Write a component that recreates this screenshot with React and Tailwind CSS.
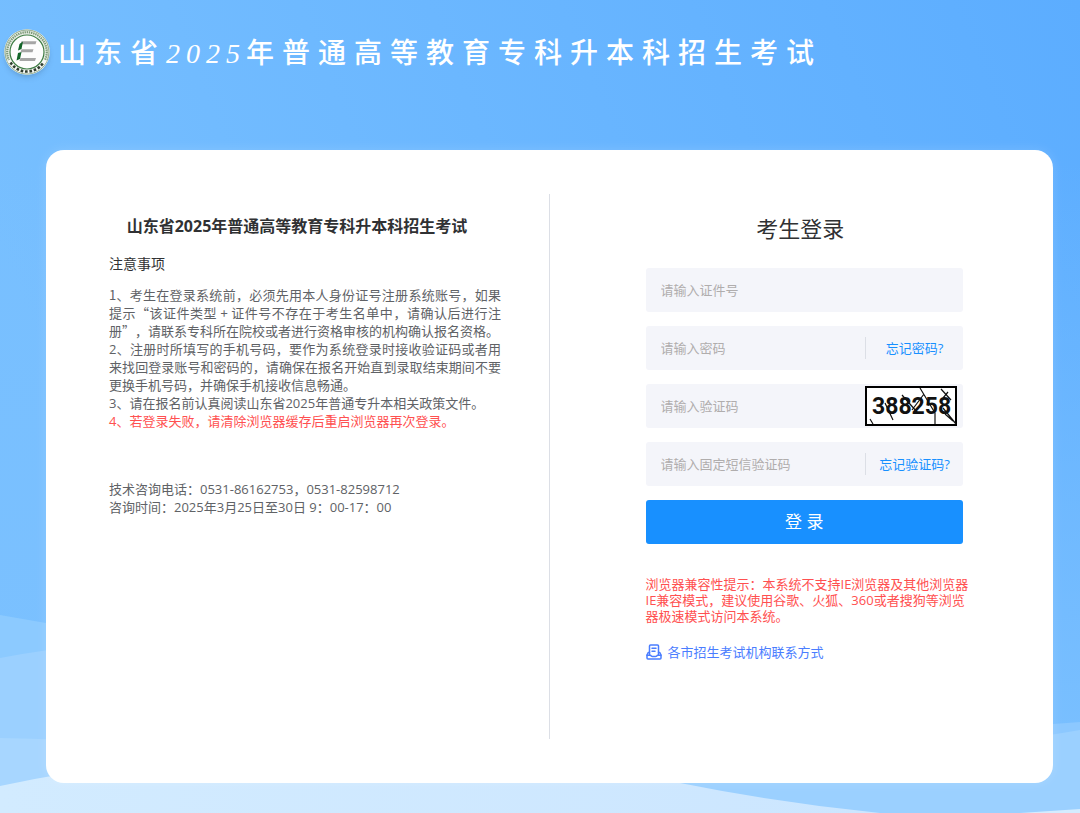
import { useState } from "react";

const Logo = () => (
    <svg viewBox="0 0 46 46" className="h-[46px] w-[46px] shrink-0 rounded-full shadow-md" aria-hidden="true">
        <circle cx="23" cy="23" r="23" fill="#e9eee6" />
        <circle cx="23" cy="23" r="22" fill="none" stroke="#8fa98b" strokeWidth="1" />
        <circle cx="23" cy="23" r="19.8" fill="none" stroke="#7d9b79" strokeWidth="2.2" strokeDasharray="1.4 0.8" />
        <path d="M5 31A20 20 0 0 0 41 31" fill="none" stroke="#f6f8f4" strokeWidth="4" />
        <path d="M6.5 33.5A19.6 19.6 0 0 0 39.5 33.5" fill="none" stroke="#2f3d2f" strokeWidth="2.6" strokeDasharray="2.6 1.8" />
        <circle cx="23" cy="23" r="17" fill="#fdfdfd" stroke="#3f7d45" strokeWidth="1.2" />
        <path d="M17.5 12.3H32.5L31.5 15.3H16.5ZM17.5 20.3H29.5L28.5 23.3H16.5ZM16.5 29H32L31 32H15.5Z" fill="#a6a6a6" />
        <path d="M15.5 15L19 12.5L17.5 20L14 21.5ZM14 24L17.5 23L16 30L12.5 31.5Z" fill="#14662a" />
    </svg>
);

const Background = () => (
    <svg
        viewBox="0 0 1080 813"
        preserveAspectRatio="none"
        className="absolute inset-0 -z-10 h-full w-full"
        aria-hidden="true"
    >
        <defs>
            <linearGradient id="sky" x1="0" y1="0.3" x2="1" y2="0">
                <stop offset="0" stopColor="#77bfff" />
                <stop offset="1" stopColor="#5cadff" />
            </linearGradient>
            <linearGradient id="skyBottom" x1="0" y1="0" x2="0" y2="1">
                <stop offset="0.2" stopColor="#7cc1ff" stopOpacity="0" />
                <stop offset="1" stopColor="#7cc1ff" />
            </linearGradient>
            <linearGradient id="front" x1="0" y1="0" x2="1" y2="0">
                <stop offset="0" stopColor="#d2ebff" />
                <stop offset="1" stopColor="#cce6ff" />
            </linearGradient>
        </defs>
        <rect width="1080" height="813" fill="url(#sky)" />
        <rect width="1080" height="813" fill="url(#skyBottom)" />
        <path d="M0 615Q300 665 600 760T1080 730V813H0Z" fill="#8ccaff" />
        <path d="M1080 722Q900 735 700 760V813H1080Z" fill="#8cc8ff" />
        <path d="M0 658Q250 610 560 690T1080 730V813H0Z" fill="#9bd0ff" />
        <path d="M0 738Q200 740 400 790V813H0Z" fill="#a7d6ff" />
        <path d="M0 786Q330 716 680 783Q780 803 880 813H0Z" fill="url(#front)" />
        <path d="M1020 813L1080 809V813Z" fill="#d4ecff" />
    </svg>
);

const Captcha = () => (
    <svg viewBox="0 0 92 40" className="h-10 w-[92px]" role="img" aria-label="验证码">
        <rect x="1" y="1" width="90" height="38" fill="#fff" stroke="#000" strokeWidth="2" />
        <text x="7" y="28" fontSize="23" fontWeight="700" fontFamily="Roboto, sans-serif" fill="#111">
            388258
        </text>
        <path
            d="M20 17L28 34M37 9L52 26M55 2L70 27M47 24L59 8M76 3L86 14M78 22L91 38M70 27V38M80 28L88 35M5 33L8 38M83 6L78 12"
            stroke="#111"
            strokeWidth="1.2"
            fill="none"
        />
    </svg>
);

const ContactIcon = () => (
    <svg
        viewBox="0 0 16 16"
        className="h-4 w-4 shrink-0"
        fill="none"
        stroke="currentColor"
        strokeWidth="1.5"
        strokeLinejoin="round"
        strokeLinecap="round"
        aria-hidden="true"
    >
        <path d="M3.5 10.5V2Q3.5 1 4.5 1H11.5Q12.5 1 12.5 2V10.5" />
        <path d="M6 4.2H10M6 7.2H9" />
        <path d="M3.5 8.5H2.2L1 11V14Q1 15 2 15H14Q15 15 15 14V11L13.8 8.5H12.5" />
        <path d="M1 11.2H4.5Q5.2 12.6 6.5 12.6H9.5Q10.8 12.6 11.5 11.2H15" />
    </svg>
);

const fields = [
    { id: "idCard", type: "text", placeholder: "请输入证件号" },
    { id: "password", type: "password", placeholder: "请输入密码", link: "忘记密码?" },
    { id: "captcha", type: "text", placeholder: "请输入验证码", captcha: true },
    { id: "smsCode", type: "text", placeholder: "请输入固定短信验证码", link: "忘记验证码?" },
];

export default function App() {
    const [values, setValues] = useState({ idCard: "", password: "", captcha: "", smsCode: "" });

    const handleChange = (id, value) => {
        setValues({ ...values, [id]: value });
    };

    return (
        <div
            lang="zh-CN"
            className="relative isolate min-h-screen overflow-hidden pb-[30px] font-['Open_Sans','Noto_Sans_CJK_SC',sans-serif] text-[13px] leading-[18px] text-[#606266] [text-spacing-trim:space-all]"
        >
            <Background />

            <header className="flex h-[104px] items-center pl-1">
                <Logo />
                <h1 className="ml-2 whitespace-nowrap font-['Noto_Sans_CJK_SC',sans-serif] text-[28px] leading-10 font-medium tracking-[8px] text-white">
                    山东省
                    <span className="font-['Liberation_Serif',serif] text-[28px] font-normal tracking-[6px] italic">2025</span>
                    年普通高等教育专科升本科招生考试
                </h1>
            </header>

            <main className="mt-[46px] mr-[27px] ml-[46px] flex min-h-[633px] rounded-[18px] bg-white py-11 shadow-[0_0_12px_rgba(255,255,255,0.15)]">
                <section className="w-1/2 border-r border-[#dcdfe6] pt-5 pl-[63px]">
                    <div className="max-w-[392px]">
                        <h2 className="-ml-4 text-center text-base leading-6 font-bold text-[#303133]">
                            山东省2025年普通高等教育专科升本科招生考试
                        </h2>
                        <h3 className="mt-4 text-sm leading-5 text-[#303133]">注意事项</h3>
                        <div className="mt-3 text-justify">
                            <p className="font-['Noto_Sans_CJK_SC',sans-serif]">
                                1、考生在登录系统前，必须先用本人身份证号注册系统账号，如果提示“该证件类型 + 证件号不存在于考生名单中，请确认后进行注册”，请联系专科所在院校或者进行资格审核的机构确认报名资格。
                            </p>
                            <p>
                                2、注册时所填写的手机号码，要作为系统登录时接收验证码或者用来找回登录账号和密码的，请确保在报名开始直到录取结束期间不要更换手机号码，并确保手机接收信息畅通。
                            </p>
                            <p>3、请在报名前认真阅读山东省2025年普通专升本相关政策文件。</p>
                            <p className="text-[#ff5050]">4、若登录失败，请清除浏览器缓存后重启浏览器再次登录。</p>
                        </div>
                        <div className="mt-[50px]">
                            <p>技术咨询电话：0531-86162753，0531-82598712</p>
                            <p>咨询时间：2025年3月25日至30日 9：00-17：00</p>
                        </div>
                    </div>
                </section>

                <section className="w-1/2 pt-5 pr-[90px] pl-24">
                    <h2 className="mr-2 text-center text-[22px] leading-7 text-[#303133]">考生登录</h2>
                    <form className="mt-[26px] flex flex-col gap-3.5" onSubmit={(e) => e.preventDefault()}>
                        {fields.map((field) => (
                            <div key={field.id} className="flex h-11 items-center rounded-[3px] bg-[#f4f5fa]">
                                <input
                                    id={field.id}
                                    type={field.type}
                                    aria-label={field.placeholder}
                                    placeholder={field.placeholder}
                                    value={values[field.id]}
                                    onChange={(e) => handleChange(field.id, e.target.value)}
                                    className="h-full min-w-0 flex-1 bg-transparent pl-[15px] outline-none placeholder:text-[#b0adad]"
                                />
                                {field.link && (
                                    <a
                                        href="#"
                                        className="w-[98px] border-l border-[#dcdfe6] text-center leading-[22px] text-[#1890ff]"
                                    >
                                        {field.link}
                                    </a>
                                )}
                                {field.captcha && (
                                    <button type="button" className="mr-1.5">
                                        <Captcha />
                                    </button>
                                )}
                            </div>
                        ))}
                        <button type="submit" className="h-11 rounded-[3px] bg-[#1890ff] text-[17px] text-white">
                            登 录
                        </button>
                    </form>
                    <p className="mt-8 -mr-2 leading-4 text-[#ff5050]">
                        浏览器兼容性提示：本系统不支持IE浏览器及其他浏览器IE兼容模式，建议使用谷歌、火狐、360或者搜狗等浏览器极速模式访问本系统。
                    </p>
                    <a href="#" className="mt-[18px] flex items-center gap-[6px] leading-5 text-[#4a7dff]">
                        <ContactIcon />
                        各市招生考试机构联系方式
                    </a>
                </section>
            </main>
        </div>
    );
}
